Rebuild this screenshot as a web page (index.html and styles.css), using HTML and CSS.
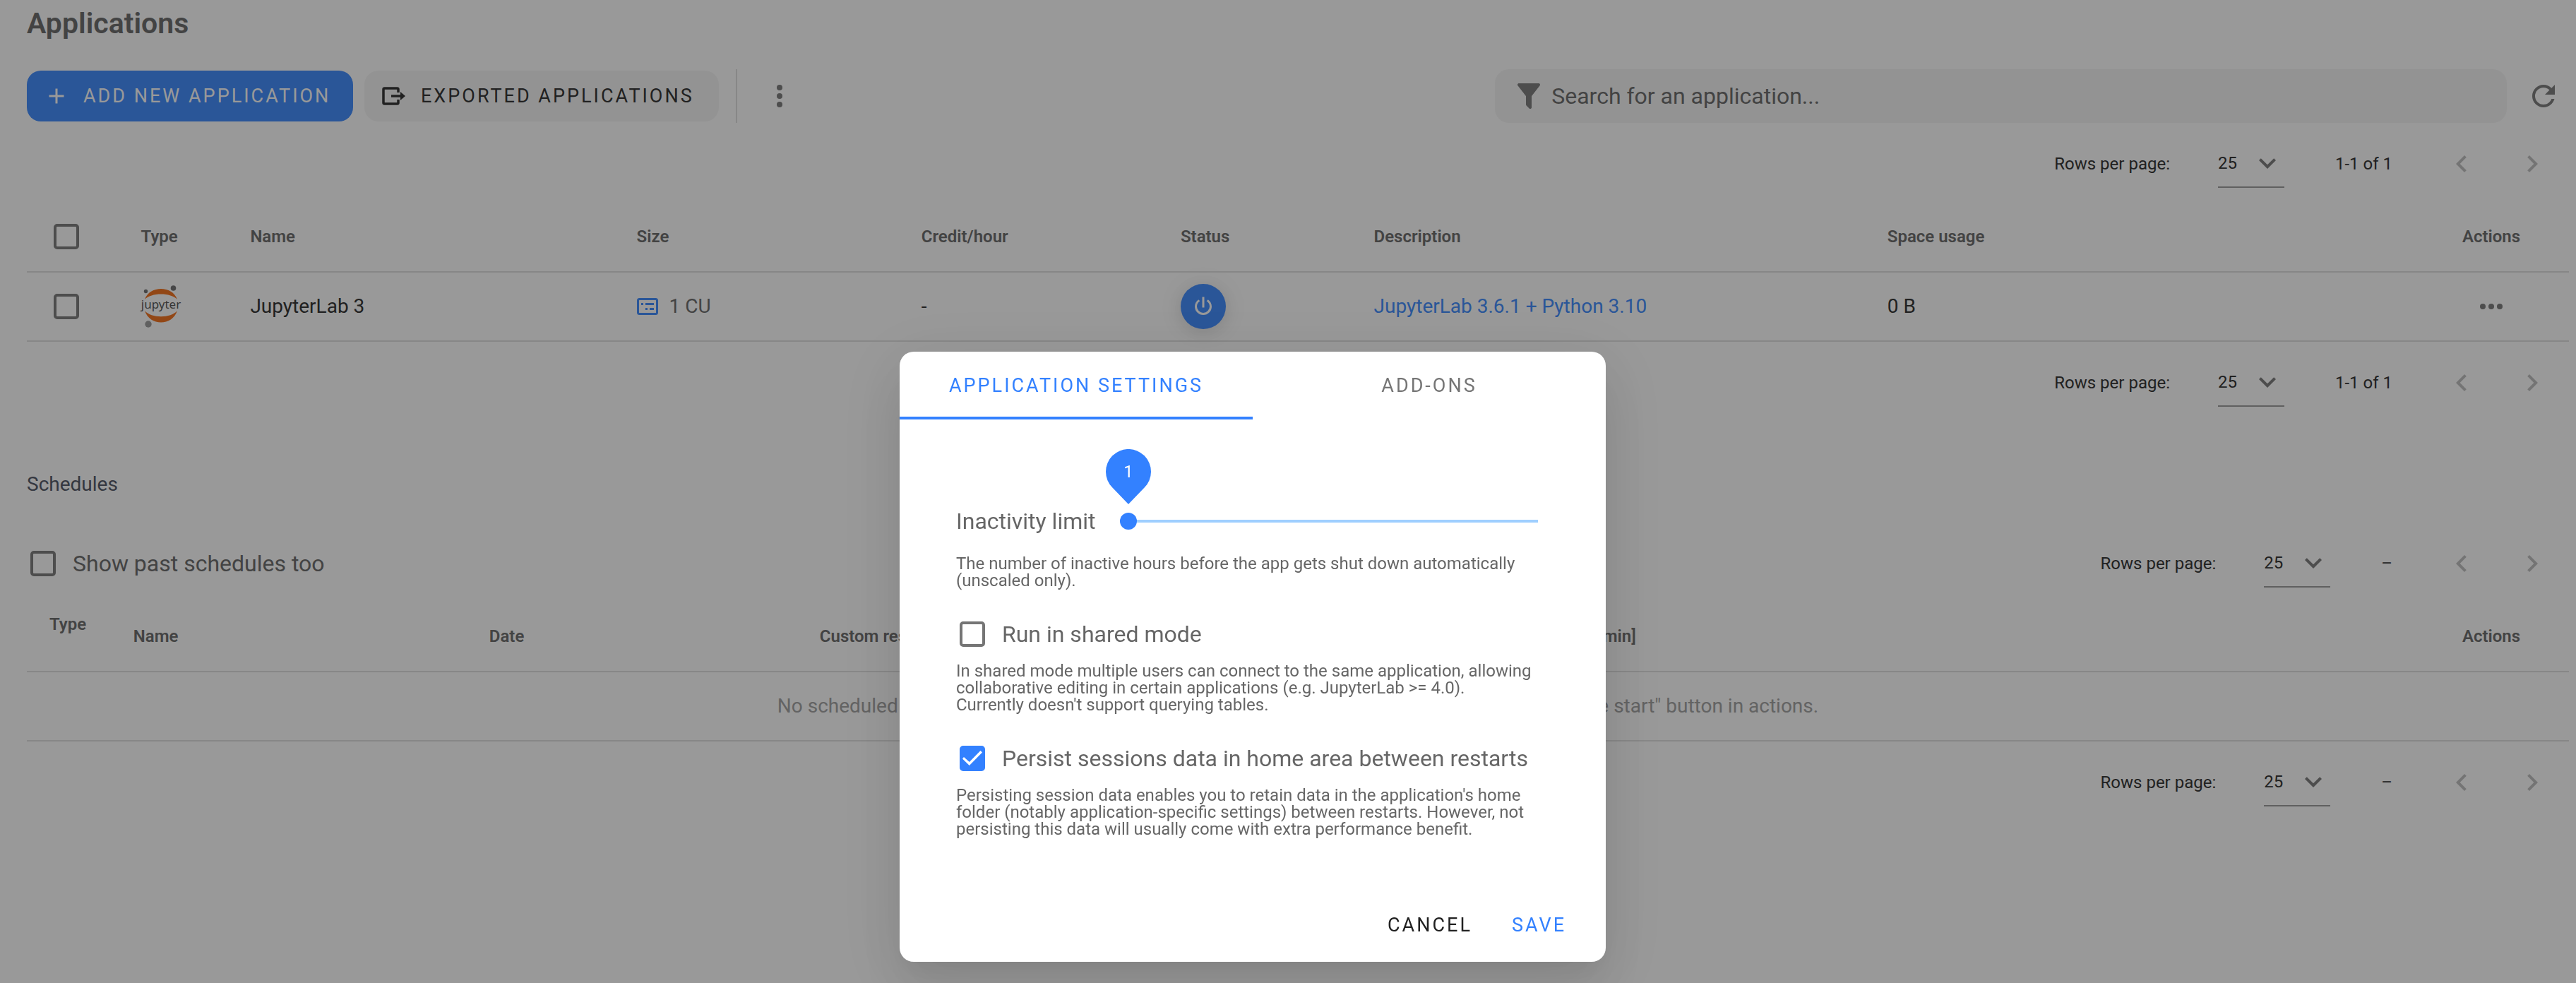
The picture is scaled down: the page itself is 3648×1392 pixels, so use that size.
FILE: index.html
```html
<!DOCTYPE html>
<html lang="en">
<head>
<meta charset="utf-8">
<title>Applications</title>
<link rel="stylesheet" href="styles.css">
</head>
<body>
<svg class="sprite" aria-hidden="true">
  <symbol id="chevron-down" viewBox="0 0 24 24"><path d="M7.41,8.58L12,13.17L16.59,8.58L18,10L12,16L6,10L7.41,8.58Z"/></symbol>
  <symbol id="chevron-left" viewBox="0 0 24 24"><path d="M15.41,16.58L10.83,12L15.41,7.41L14,6L8,12L14,18L15.41,16.58Z"/></symbol>
  <symbol id="chevron-right" viewBox="0 0 24 24"><path d="M8.59,16.58L13.17,12L8.59,7.41L10,6L16,12L10,18L8.59,16.58Z"/></symbol>
  <symbol id="plus" viewBox="0 0 24 24"><path d="M19,13H13V19H11V13H5V11H11V5H13V11H19V13Z"/></symbol>
  <symbol id="dots-vertical" viewBox="0 0 24 24"><circle cx="12" cy="6" r="2"/><circle cx="12" cy="12" r="2"/><circle cx="12" cy="18" r="2"/></symbol>
  <symbol id="dots-horizontal" viewBox="0 0 24 24"><circle cx="6" cy="12" r="2"/><circle cx="12" cy="12" r="2"/><circle cx="18" cy="12" r="2"/></symbol>
  <symbol id="filter" viewBox="0 0 24 24"><path d="M14,12V19.88C14.04,20.18 13.94,20.5 13.71,20.71C13.32,21.1 12.69,21.1 12.3,20.71L10.29,18.7C10.06,18.47 9.96,18.16 10,17.87V12H9.97L4.21,4.62C3.87,4.19 3.95,3.56 4.38,3.22C4.57,3.08 4.78,3 5,3H19C19.22,3 19.43,3.08 19.62,3.22C20.05,3.56 20.13,4.19 19.79,4.62L14.03,12H14Z"/></symbol>
  <symbol id="refresh" viewBox="0 0 24 24"><path d="M17.65,6.35C16.2,4.9 14.21,4 12,4A8,8 0 0,0 4,12A8,8 0 0,0 12,20C15.73,20 18.84,17.45 19.73,14H17.65C16.83,16.33 14.61,18 12,18A6,6 0 0,1 6,12A6,6 0 0,1 12,6C13.66,6 15.14,6.69 16.22,7.78L13,11H20V4L17.65,6.35Z"/></symbol>
  <symbol id="power" viewBox="0 0 24 24"><path d="M16.56,5.44L15.11,6.89C16.84,7.94 18,9.83 18,12A6,6 0 0,1 12,18A6,6 0 0,1 6,12C6,9.83 7.16,7.94 8.88,6.88L7.44,5.44C5.36,6.88 4,9.28 4,12A8,8 0 0,0 12,20A8,8 0 0,0 20,12C20,9.28 18.64,6.88 16.56,5.44M13,3H11V13H13Z"/></symbol>
</svg>

<main class="page">
  <h1 class="title">Applications</h1>

  <div class="toolbar">
    <button class="btn btn-primary" type="button"><svg class="icon-sm"><use href="#plus"/></svg>ADD NEW APPLICATION</button>
    <button class="btn btn-tonal" type="button">
      <svg class="icon-export" viewBox="0 0 36 28"><path d="M24 9V4.500Q24 3 22.500 3H4.500Q3 3 3 4.500V23.500Q3 25 4.500 25H22.500Q24 25 24 23.500V19" fill="none" stroke="currentColor" stroke-width="3.500"/><path d="M14 12.300H27V8L34 14L27 20V15.700H14Z"/></svg>
      EXPORTED APPLICATIONS</button>
    <span class="divider"></span>
    <button class="icon-btn" type="button" aria-label="More"><svg class="icon"><use href="#dots-vertical"/></svg></button>
    <label class="search">
      <svg class="icon"><use href="#filter"/></svg>
      <input class="search-input" type="text" aria-label="Search" placeholder="Search for an application...">
    </label>
    <button class="icon-btn refresh" type="button" aria-label="Refresh"><svg class="icon"><use href="#refresh"/></svg></button>
  </div>

  <div class="pager">
    <label class="pager-size">Rows per page:
      <span class="select"><select><option>25</option></select><svg class="icon"><use href="#chevron-down"/></svg></span>
    </label>
    <span class="pager-range">1-1 of 1</span>
    <button class="pager-btn" type="button" disabled aria-label="Previous page"><svg class="icon"><use href="#chevron-left"/></svg></button>
    <button class="pager-btn" type="button" disabled aria-label="Next page"><svg class="icon"><use href="#chevron-right"/></svg></button>
  </div>

  <table class="table">
    <colgroup><col class="c-check"><col class="c-type"><col class="c-name"><col class="c-size"><col class="c-credit"><col class="c-status"><col class="c-desc"><col><col class="c-actions"></colgroup>
    <thead>
      <tr>
        <th class="check-cell"><input class="checkbox" type="checkbox" aria-label="Select all"></th>
        <th>Type</th><th>Name</th><th>Size</th><th>Credit/hour</th><th>Status</th><th>Description</th><th>Space usage</th>
        <th class="actions">Actions</th>
      </tr>
    </thead>
    <tbody>
      <tr>
        <td class="check-cell"><input class="checkbox" type="checkbox" aria-label="Select JupyterLab 3"></td>
        <td><svg class="jupyter" viewBox="0 0 56 60" role="img" aria-label="Jupyter">
          <path fill="#f37726" d="M5 20C12 0 44 0 51 20C42 10 14 10 5 20ZM5 36C14 47 42 47 51 36C44 58 12 58 5 36Z"/>
          <circle cx="6.500" cy="8.500" r="2.700" fill="#767677"/><circle cx="45.500" cy="4" r="3.800" fill="#767677"/><circle cx="10" cy="55" r="4.700" fill="#a0a0a0"/>
          <text class="jupyter-text" x="28" y="33" text-anchor="middle">jupyter</text></svg></td>
        <td>JupyterLab 3</td>
        <td><span class="size"><svg class="icon-size" viewBox="0 0 30 26"><rect x="1.500" y="2.500" width="27" height="21" rx="2" fill="none" stroke="currentColor" stroke-width="3"/><path d="M6 8h3v3H6zM12 8h12v3H12zM12 15h3v3h-3zM18 15h6v3h-6z"/></svg>1 CU</span></td>
        <td>-</td>
        <td><button class="power" type="button" aria-label="Start"><svg class="icon-sm"><use href="#power"/></svg></button></td>
        <td><a class="link" href="#">JupyterLab 3.6.1 + Python 3.10</a></td>
        <td>0 B</td>
        <td class="actions"><button class="icon-btn" type="button" aria-label="Row actions"><svg class="icon"><use href="#dots-horizontal"/></svg></button></td>
      </tr>
    </tbody>
  </table>

  <div class="pager">
    <label class="pager-size">Rows per page:
      <span class="select"><select><option>25</option></select><svg class="icon"><use href="#chevron-down"/></svg></span>
    </label>
    <span class="pager-range">1-1 of 1</span>
    <button class="pager-btn" type="button" disabled aria-label="Previous page"><svg class="icon"><use href="#chevron-left"/></svg></button>
    <button class="pager-btn" type="button" disabled aria-label="Next page"><svg class="icon"><use href="#chevron-right"/></svg></button>
  </div>

  <h2 class="subtitle">Schedules</h2>

  <div class="pager pager-schedules">
    <label class="option pager-start"><input class="checkbox" type="checkbox">Show past schedules too</label>
    <label class="pager-size">Rows per page:
      <span class="select"><select><option>25</option></select><svg class="icon"><use href="#chevron-down"/></svg></span>
    </label>
    <span class="pager-range">–</span>
    <button class="pager-btn" type="button" disabled aria-label="Previous page"><svg class="icon"><use href="#chevron-left"/></svg></button>
    <button class="pager-btn" type="button" disabled aria-label="Next page"><svg class="icon"><use href="#chevron-right"/></svg></button>
  </div>

  <table class="table">
    <colgroup><col class="s-type"><col class="s-name"><col class="s-date"><col class="s-custom"><col class="s-limit"><col><col class="c-actions"></colgroup>
    <thead>
      <tr><th class="raised">Type</th><th>Name</th><th>Date</th><th>Custom resources</th><th class="end">Time limit [min]</th><th></th><th class="actions">Actions</th></tr>
    </thead>
    <tbody>
      <tr><td class="empty" colspan="7">No scheduled starts found. Create one for any of your applications by clicking on the "Schedule start" button in actions.</td></tr>
    </tbody>
  </table>

  <div class="pager">
    <label class="pager-size">Rows per page:
      <span class="select"><select><option>25</option></select><svg class="icon"><use href="#chevron-down"/></svg></span>
    </label>
    <span class="pager-range">–</span>
    <button class="pager-btn" type="button" disabled aria-label="Previous page"><svg class="icon"><use href="#chevron-left"/></svg></button>
    <button class="pager-btn" type="button" disabled aria-label="Next page"><svg class="icon"><use href="#chevron-right"/></svg></button>
  </div>
</main>

<div class="overlay">
  <section class="dialog" role="dialog" aria-modal="true" aria-label="Application settings">
    <div class="tabs" role="tablist">
      <button class="tab tab-active" type="button" role="tab" aria-selected="true">APPLICATION SETTINGS</button>
      <button class="tab" type="button" role="tab" aria-selected="false">ADD-ONS</button>
    </div>
    <div class="dialog-body">
      <div class="slider-row">
        <label class="slider-label" for="limit">Inactivity limit</label>
        <div class="slider">
          <input id="limit" class="range" type="range" min="1" max="24" value="1">
          <div class="pin">
            <svg class="pin-shape" viewBox="0 0 64 78"><path d="M32 78L9.400 54.600A32 32 0 1 1 54.600 54.600Z"/></svg>
            <output class="pin-value" for="limit">1</output>
          </div>
        </div>
      </div>
      <p class="hint hint-slider">The number of inactive hours before the app gets shut down automatically (unscaled only).</p>
      <label class="option option-block"><input class="checkbox" type="checkbox">Run in shared mode</label>
      <p class="hint">In shared mode multiple users can connect to the same application, allowing collaborative editing in certain applications (e.g. JupyterLab &gt;= 4.0). Currently doesn't support querying tables.</p>
      <label class="option option-block"><input class="checkbox" type="checkbox" checked>Persist sessions data in home area between restarts</label>
      <p class="hint">Persisting session data enables you to retain data in the application's home folder (notably application-specific settings) between restarts. However, not persisting this data will usually come with extra performance benefit.</p>
    </div>
    <div class="dialog-actions">
      <button class="text-btn" type="button">CANCEL</button>
      <button class="text-btn text-btn-primary" type="button">SAVE</button>
    </div>
  </section>
</div>
</body>
</html>
```
FILE: styles.css
```css
:root {
  --ink: #373737;
  --muted: #717171;
  --icon: #808080;
  --line: #e2e2e2;
  --soft: #f6f6f6;
  --blue: #468ffd;
  --primary: #3381ff;
}

* { box-sizing: border-box; }

body {
  margin: 0;
  min-height: 100vh;
  background: #fff;
  color: var(--ink);
  font: 28px/40px Roboto, "Liberation Sans", sans-serif;
}

button, input, select { font: inherit; color: inherit; margin: 0; }
button { border: 0; background: none; padding: 0; cursor: pointer; }
svg { display: block; fill: currentColor; flex: none; }

.sprite { position: absolute; width: 0; height: 0; }
.icon { width: 48px; height: 48px; }
.icon-sm { width: 36px; height: 36px; }
.icon-export { width: 36px; height: 28px; }
.icon-size { width: 30px; height: 26px; color: var(--blue); }

.page { padding: 0 10px 0 38px; }

.title {
  margin: 0;
  color: var(--muted);
  font-size: 41px;
  line-height: 66px;
  font-weight: 600;
}

/* Toolbar */
.toolbar {
  display: flex;
  align-items: center;
  margin-top: 32px;
  height: 76px;
}

.btn {
  display: flex;
  align-items: center;
  gap: 20px;
  height: 72px;
  padding: 0 24px;
  border-radius: 20px;
  font-size: 27px;
  letter-spacing: 3px;
  white-space: nowrap;
}
.btn-primary { min-width: 462px; background: var(--blue); color: #fff; }
.btn-tonal { min-width: 502px; margin-left: 16px; background: var(--soft); }

.divider { width: 2px; height: 76px; margin: 0 36px 0 24px; background: var(--line); }

.icon-btn { display: inline-flex; color: var(--icon); }

.search {
  display: flex;
  align-items: center;
  gap: 8px;
  width: 39.8%;
  height: 76px;
  margin-left: auto;
  padding: 0 24px;
  border-radius: 20px;
  background: var(--soft);
  color: var(--icon);
}
.search-input {
  flex: 1;
  height: 48px;
  padding: 0;
  border: 0;
  outline: 0;
  background: none;
  font-size: 32px;
}
.search-input::placeholder { color: var(--muted); opacity: 1; }
.refresh { margin: 0 12px 0 28px; }

/* Pagination */
.pager {
  display: flex;
  align-items: center;
  justify-content: flex-end;
  height: 112px;
  padding: 4px 22px 0 0;
  font-size: 24px;
}
.pager-size { display: flex; align-items: center; gap: 68px; }
.pager-range { margin: 0 68px 0 72px; }
.pager-btn {
  display: flex;
  justify-content: center;
  width: 60px;
  color: #c2c2c2;
}
.pager-btn + .pager-btn { margin-left: 40px; }
.pager-start { margin-right: auto; }
.pager-schedules { margin-top: 34px; }

.select { display: grid; align-items: center; width: 94px; height: 68px; border-bottom: 2px solid #a0a0a0; }
.select select {
  grid-area: 1 / 1;
  width: 94px;
  height: 66px;
  padding: 0;
  border: 0;
  outline: 0;
  background: none;
  appearance: none;
}
.select .icon { grid-area: 1 / 1; justify-self: end; color: var(--icon); pointer-events: none; }

/* Tables */
.table { width: 100%; table-layout: fixed; border-collapse: separate; border-spacing: 0; }
.table th, .table td {
  height: 98px;
  padding: 0 0 0 32px;
  border-bottom: 2px solid var(--line);
  text-align: left;
  white-space: nowrap;
}
.table th { height: 100px; color: var(--muted); font-size: 24px; font-weight: 600; }
.table .check-cell { padding: 0 0 0 38px; }
.table .actions { padding: 0; text-align: center; }
.table .actions .icon-btn { vertical-align: middle; }
.table .end { padding-right: 36px; text-align: right; }
.table .raised { padding-bottom: 34px; }
.table .empty { padding: 0; color: #a5a5a5; text-align: center; }

.c-check { width: 3.6%; }
.c-type { width: 4.3%; }
.c-name { width: 15.2%; }
.c-size { width: 11.2%; }
.c-credit { width: 10.2%; }
.c-status { width: 7.6%; }
.c-desc { width: 20.2%; }
.c-actions { width: 220px; }
.s-type { width: 3.3%; }
.s-name { width: 14%; }
.s-date { width: 13%; }
.s-custom { width: 17%; }
.s-limit { width: 17%; }

.jupyter { width: 56px; height: 60px; overflow: visible; }
.jupyter-text { font: 17px "Noto Sans", sans-serif; fill: #5a5a5a; }
.size { display: flex; align-items: center; gap: 16px; color: var(--muted); }
.power {
  display: flex;
  align-items: center;
  justify-content: center;
  width: 64px;
  height: 64px;
  border-radius: 50%;
  background: var(--blue);
  color: #fff;
  box-shadow: 0 6px 24px rgba(0, 0, 0, .08), 0 2px 36px rgba(0, 0, 0, .08);
}
.link { color: var(--blue); text-decoration: none; }

.subtitle {
  margin: 70px 0 0;
  color: #585d6b;
  font-size: 28px;
  line-height: 40px;
  font-weight: 400;
}

/* Tick boxes */
.checkbox {
  display: grid;
  place-items: center;
  flex: none;
  width: 36px;
  height: 36px;
  border: 4px solid var(--icon);
  border-radius: 5px;
  appearance: none;
}
.checkbox:checked { border-color: var(--primary); background: var(--primary); }
.checkbox:checked::before {
  content: "";
  width: 28px;
  height: 28px;
  background: #fff;
  clip-path: polygon(7% 43%, 0 52%, 35% 86%, 100% 20%, 91% 11%, 35% 68%);
}
.option {
  display: flex;
  align-items: center;
  gap: 24px;
  height: 48px;
  padding-left: 5px;
  color: var(--muted);
  font-size: 32px;
}
.option-block { margin-top: 40px; color: #666; }

/* Dialog */
.overlay {
  position: fixed;
  inset: 0;
  display: flex;
  align-items: flex-end;
  justify-content: center;
  padding: 0 100px 30px 0;
  background: rgba(0, 0, 0, .4);
}
.dialog {
  width: 1000px;
  max-width: 100%;
  border-radius: 20px;
  background: #fff;
  color: #666;
  box-shadow: 0 22px 30px -14px rgba(0, 0, 0, .06), 0 48px 76px 6px rgba(0, 0, 0, .06), 0 18px 92px 16px rgba(0, 0, 0, .08);
}
.dialog .checkbox:not(:checked) { border-color: #757575; }

.tabs { display: flex; height: 96px; }
.tab { flex: 1; color: #757575; font-size: 27px; letter-spacing: 3px; }
.tab-active { color: var(--primary); box-shadow: inset 0 -4px var(--primary); }

.dialog-body { padding: 120px 96px 0 80px; }
.slider-row { display: flex; align-items: center; height: 48px; gap: 32px; font-size: 32px; }
.slider-label { min-width: 200px; }
.slider { position: relative; display: flex; align-items: center; flex: 1; }
.range {
  width: 100%;
  height: 24px;
  background: linear-gradient(#9fcfff, #9fcfff) center / 100% 4px no-repeat;
  appearance: none;
}
.range::-webkit-slider-thumb {
  width: 24px;
  height: 24px;
  border-radius: 50%;
  background: var(--primary);
  appearance: none;
}
.pin { position: absolute; left: -20px; bottom: 36px; display: grid; width: 64px; height: 78px; }
.pin-shape { grid-area: 1 / 1; width: 64px; height: 78px; color: var(--primary); }
.pin-value { grid-area: 1 / 1; color: #fff; font-size: 24px; line-height: 64px; text-align: center; }

.hint { margin: 16px 6px 0 0; font-size: 24px; line-height: 24px; }
.hint-slider { margin-top: 24px; }

.dialog-actions { display: flex; align-items: center; justify-content: flex-end; height: 104px; margin-top: 72px; padding-right: 28px; }
.text-btn { height: 72px; padding: 0 28px; color: #212121; font-size: 27px; letter-spacing: 3px; }
.text-btn-primary { color: var(--primary); }
```
